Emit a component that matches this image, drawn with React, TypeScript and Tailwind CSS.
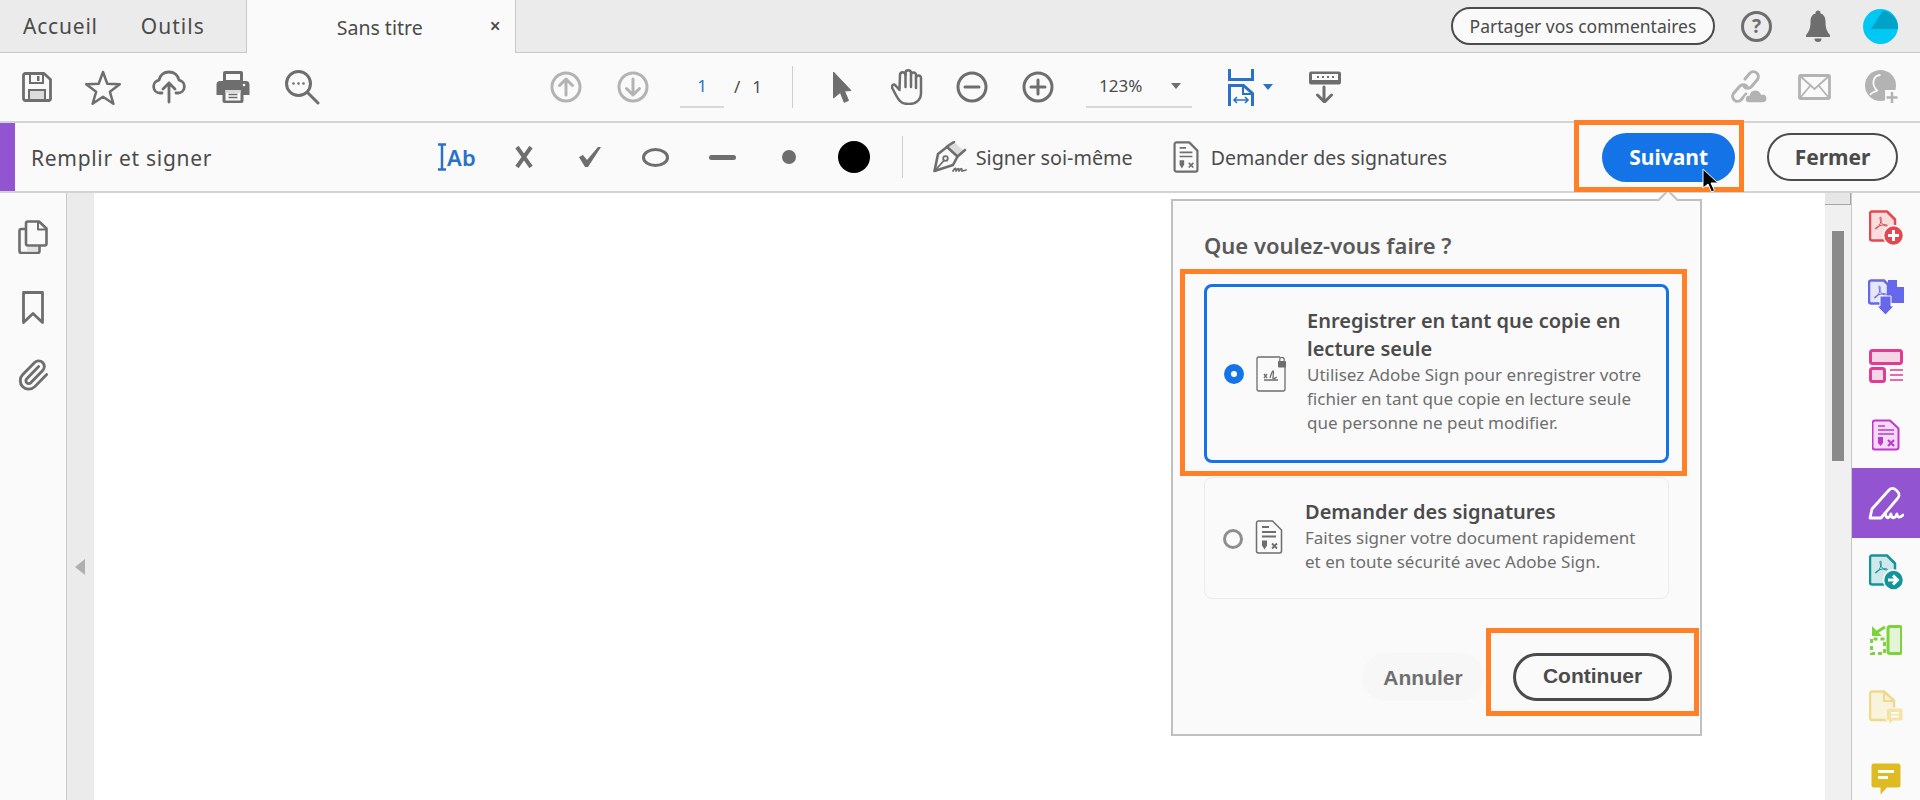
import React from 'react'
import { Paperclip } from 'lucide-react'

const GRAY = '#6e6e6e'
const LIGHT = '#b3b3b3'
const BLUE = '#2a72c9'

const Swoosh = ({ color }: { color: string }) => (
  <path
    d="M7 19c2-1 4-4 5-8 .4-2 .2-4-.5-4-.9 0-.6 3 .8 5.500 1.500 2.500 3.500 3.500 5.200 3.500 1.200 0 1.200-1.200-.5-1.300-3-.2-7 .9-10 3-1 .8-.8 1.500 0 .8z"
    fill="none"
    stroke={color}
    strokeWidth="1"
  />
)

const SaveIcon = () => (
  <svg width="30" height="30" viewBox="0 0 30 30" fill="none" stroke={GRAY} strokeWidth="2.800">
    <path d="M3 1.500h19l6.500 6v19a2 2 0 0 1-2 2h-23a2 2 0 0 1-2-2v-23a2 2 0 0 1 2-2z" strokeLinejoin="round" />
    <path d="M8 2v9h13V2" strokeWidth="2" />
    <rect x="15" y="4" width="2.500" height="5" fill={GRAY} stroke="none" />
    <rect x="7" y="18" width="16" height="10" fill="#dcdcdc" strokeWidth="2" />
  </svg>
)

const StarIcon = () => (
  <svg width="36" height="36" viewBox="0 0 36 36" fill="none" stroke={GRAY} strokeWidth="2.500" strokeLinejoin="round">
    <path d="M18 3l4.300 11.800 12.500.4-9.900 7.600 3.500 12-10.400-7-10.400 7 3.500-12L1.200 15.200l12.500-.4z" />
  </svg>
)

const CloudIcon = () => (
  <svg width="34" height="34" viewBox="0 0 34 34" fill="none" stroke={GRAY} strokeWidth="2.800" strokeLinecap="round" strokeLinejoin="round">
    <path d="M10 23H8a6.500 6.500 0 0 1-1-12.900C8 5 12 2 17 2s9 3 10 8.100A6.500 6.500 0 0 1 26 23h-2" />
    <path d="M17 32V13M11 19l6-6 6 6" />
  </svg>
)

const PrintIcon = () => (
  <svg width="34" height="34" viewBox="0 0 34 34">
    <path d="M7 11V3a2 2 0 0 1 2-2h16a2 2 0 0 1 2 2v8z" fill={GRAY} />
    <rect x="10" y="4" width="14" height="6" fill="#fafafa" />
    <path d="M4 11h26a3.500 3.500 0 0 1 3.500 3.500V25h-6v6a2 2 0 0 1-2 2H8.500a2 2 0 0 1-2-2v-6H.5V14.500A3.500 3.500 0 0 1 4 11z" fill={GRAY} />
    <rect x="9.500" y="20" width="15" height="10.500" fill="#fafafa" />
    <rect x="9.500" y="20" width="15" height="3" fill="#dcdcdc" />
    <path d="M12.500 24.500h9M12.500 27.500h9" stroke={GRAY} strokeWidth="1.500" />
    <circle cx="28" cy="15" r="1.300" fill="#fafafa" />
  </svg>
)

const SearchIcon = () => (
  <svg width="36" height="36" viewBox="0 0 36 36" fill="none" stroke={GRAY} strokeWidth="3" strokeLinecap="round">
    <circle cx="14.500" cy="14.500" r="12" />
    <path d="M24 24l10 10" />
    <circle cx="9.500" cy="14.500" r="1.300" fill={GRAY} stroke="none" />
    <circle cx="14.500" cy="14.500" r="1.300" fill={GRAY} stroke="none" />
    <circle cx="19.500" cy="14.500" r="1.300" fill={GRAY} stroke="none" />
  </svg>
)

const ArrowCircle = ({ down }: { down?: boolean }) => (
  <svg width="32" height="32" viewBox="0 0 32 32" fill="none" stroke={LIGHT} strokeWidth="3" strokeLinecap="round" strokeLinejoin="round">
    <circle cx="16" cy="16" r="14" />
    {down ? <path d="M16 8v16M9.500 17.500L16 24l6.500-6.500" /> : <path d="M16 24V8M9.500 14.500L16 8l6.500 6.500" />}
  </svg>
)

const PointerIcon = () => (
  <svg width="20" height="32" viewBox="0 0 20 32">
    <path d="M1.500 1L19 19.500l-6.500.5 4 9.500-4.300 1.800-3.900-9.800L1.500 27z" fill={GRAY} stroke={GRAY} strokeLinejoin="round" />
  </svg>
)

const HandIcon = () => (
  <svg width="32" height="36" viewBox="0 0 32 36" fill="none" stroke={GRAY} strokeWidth="2.500" strokeLinejoin="round" strokeLinecap="round">
    <path d="M8.500 21L4.500 16.500C2.500 14.500 0 16.500 1.500 19.500 4 24 6 29 9 32c2 2.500 5 3 9 3 7 0 12-4 12-11V9a2.500 2.500 0 0 0-5 0V6a2.500 2.500 0 0 0-5 0V4a2.500 2.500 0 0 0-5.500 0v2a2.500 2.500 0 0 0-5.500 0z" />
    <path d="M14.500 5v13M20 6v12M25 9v10" />
  </svg>
)

const CircleSign = ({ plus }: { plus?: boolean }) => (
  <svg width="32" height="32" viewBox="0 0 32 32" fill="none" stroke={GRAY} strokeWidth="3" strokeLinecap="round">
    <circle cx="16" cy="16" r="14" />
    <path d="M9 16h14" />
    {plus && <path d="M16 9v14" />}
  </svg>
)

const FitIcon = () => (
  <svg width="26" height="37" viewBox="0 0 26 37" fill="none" stroke={BLUE} strokeWidth="3">
    <path d="M1.500 0v10.500h23V0" />
    <path d="M1.500 37V16.500h14l9 8V37" />
    <path d="M15 17v8h9" strokeWidth="2" />
    <path d="M6 31h14M9 28l-3 3 3 3M17 28l3 3-3 3" strokeWidth="1.600" />
  </svg>
)

const ReadIcon = () => (
  <svg width="34" height="32" viewBox="0 0 34 32" fill="none">
    <rect x="1" y="0.500" width="32" height="13" rx="2" fill={GRAY} />
    <rect x="4" y="3" width="26" height="6" fill="#fafafa" />
    <path d="M9 6h2M14 6h2M19 6h2M24 6h2" stroke={GRAY} strokeWidth="2" />
    <path d="M16 16v14M9.500 24l7 7 7-7" stroke={GRAY} strokeWidth="3" strokeLinecap="round" strokeLinejoin="round" />
  </svg>
)

const LinkCloudIcon = () => (
  <svg width="38" height="34" viewBox="0 0 38 34" fill="none" stroke={LIGHT} strokeWidth="3" strokeLinecap="round">
    <path d="M15 9l5-6a5 5 0 0 1 7.500 6.500l-6 7a5 5 0 0 1-7.500 0" />
    <path d="M16 24l-5 6a5 5 0 0 1-7.500-6.500l6-7a5 5 0 0 1 7.500 0" />
    <path d="M19 33a4 4 0 0 1 0-8 6.500 6.500 0 0 1 12.500-1 4.500 4.500 0 0 1 2 9z" fill={LIGHT} stroke="#fafafa" strokeWidth="1.500" />
  </svg>
)

const MailIcon = () => (
  <svg width="33" height="26" viewBox="0 0 33 26" fill="none" stroke={LIGHT} strokeWidth="2.800">
    <rect x="1.500" y="1.500" width="30" height="23" rx="1" />
    <path d="M2 2l14.500 13L31 2M2 24l10-12M31 24L21 12" strokeWidth="1.800" />
  </svg>
)

const PersonPlusIcon = () => (
  <svg width="34" height="34" viewBox="0 0 34 34" fill="none">
    <circle cx="15.500" cy="15.500" r="15.500" fill={LIGHT} />
    <path d="M5 25c2-3 5-3 7-4.500-3-3-4-6-3.500-9.500 1-4 4-6 7-6" stroke="#fafafa" strokeWidth="1.800" />
    <rect x="20" y="20" width="14" height="14" fill="#fafafa" />
    <path d="M27 22v11M21.500 27.500h11" stroke={LIGHT} strokeWidth="2.500" />
  </svg>
)

const BellIcon = () => (
  <svg width="26" height="33" viewBox="0 0 26 33" fill={GRAY}>
    <circle cx="13" cy="3" r="2.500" />
    <path d="M13 3c-5 0-7.500 3.500-7.500 8.500 0 6-1.200 10-4.500 13.500v2h24v-2c-3.300-3.500-4.500-7.500-4.500-13.500C20.500 6.500 18 3 13 3z" />
    <path d="M9.500 28.500h7a3.500 3.500 0 0 1-7 0z" />
  </svg>
)

const AvatarIcon = () => (
  <svg width="35" height="35" viewBox="0 0 35 35">
    <circle cx="17.500" cy="17.500" r="17.500" fill="#00c8f5" />
    <path d="M20 1.500L8 20h27c.3-1 .3-6-3-11-3-4-7-6.500-12-7.500z" fill="#00a3c7" />
  </svg>
)

const IBeam = () => (
  <svg width="9" height="28" viewBox="0 0 9 28" fill="none" stroke={BLUE} strokeWidth="2.500">
    <path d="M0 1.500h8M0 26.500h8M4 1.500v25" />
  </svg>
)

const CrossIcon = () => (
  <svg width="20" height="22" viewBox="0 0 20 22" fill="none" stroke={GRAY} strokeWidth="4">
    <path d="M3 1l14 20M17 1L3 21" />
  </svg>
)

const CheckIcon = () => (
  <svg width="24" height="22" viewBox="0 0 24 22" fill={GRAY}>
    <path d="M1 11l4-2 4 5L20 1h3L10 21H7z" />
  </svg>
)

const PenIcon = () => (
  <svg width="34" height="32" viewBox="0 0 34 32" fill="none" stroke={GRAY} strokeWidth="2.600" strokeLinecap="round" strokeLinejoin="round">
    <path d="M14 6L21 1l10 9-6 5z" fill="#dcdcdc" strokeWidth="0" />
    <path d="M1.500 30L5 13l9-7 10.500 9.500L20 24z" />
    <path d="M2 29.500L10.500 20" strokeWidth="1.800" />
    <circle cx="12.500" cy="17.500" r="2.300" strokeWidth="1.800" />
    <path d="M14 5.500L21 1M24.500 15.500L32 9" />
    <path d="M20 30c2-3 3-4 3 0 2-3 3-3 3 0 2-3 3-3 3 0 1 0 2-.3 4-1" strokeWidth="1.800" />
  </svg>
)

const RequestDoc = ({ width = 28, height = 36, line = 2.400 }: { width?: number; height?: number; line?: number }) => (
  <svg width={width} height={height} viewBox="0 0 28 35" fill="none" stroke={GRAY} strokeWidth={line}>
    <path d="M3.500 1.500h14l9 9v21a2 2 0 0 1-2 2h-21a2 2 0 0 1-2-2v-28a2 2 0 0 1 2-2z" strokeLinejoin="round" />
    <path d="M7 7.500h7M7 12.500h14M7 17h14" strokeWidth="1.800" />
    <path d="M7 21h5v5l-2.500 4L7 26z" fill={GRAY} stroke="none" />
    <path d="M17 24l5 5M22 24l-5 5" strokeWidth="1.800" />
  </svg>
)

const CopyPagesIcon = () => (
  <svg width="30" height="34" viewBox="0 0 30 34" fill="none" stroke={GRAY} strokeWidth="2.600" strokeLinejoin="round">
    <path d="M8 9H3.500a2 2 0 0 0-2 2v20a2 2 0 0 0 2 2h16a2 2 0 0 0 2-2v-5" />
    <path d="M10 1.500h11l7.500 7v15a2 2 0 0 1-2 2H10a2 2 0 0 1-2-2v-20a2 2 0 0 1 2-2z" />
    <path d="M20 2v7.500h8" strokeWidth="2" />
    <rect x="9" y="27" width="11" height="4" fill="#e2e2e2" stroke="none" />
  </svg>
)

const BookmarkIcon = () => (
  <svg width="22" height="34" viewBox="0 0 22 34" fill="none" stroke={GRAY} strokeWidth="2.800" strokeLinejoin="round">
    <path d="M1.500 1.500h19v30l-9.500-9-9.500 9z" />
  </svg>
)

const CreatePdf = () => (
  <svg width="34" height="36" viewBox="0 0 34 36">
    <path d="M3 1.500h15l8 8v19a2 2 0 0 1-2 2H3a2 2 0 0 1-2-2v-25a2 2 0 0 1 2-2z" fill="#f9dcdc" stroke="#e34850" strokeWidth="2.500" strokeLinejoin="round" />
    <Swoosh color="#e34850" />
    <circle cx="24.500" cy="25.500" r="10" fill="#e34850" stroke="#fafafa" strokeWidth="1.500" />
    <path d="M24.500 20v11M19 25.500h11" stroke="#fff" strokeWidth="3" />
  </svg>
)

const CombinePdf = () => (
  <svg width="37" height="37" viewBox="0 0 37 37">
    <path d="M3 1.500h13l4 4v19H3a2 2 0 0 1-2-2v-19a2 2 0 0 1 2-2z" fill="#e6e6fb" stroke="#6767ec" strokeWidth="2.500" />
    <Swoosh color="#6767ec" />
    <path d="M20 1h9l7 7v16H20z" fill="#6767ec" />
    <path d="M29 0l8 8h-8z" fill="#fafafa" />
    <path d="M14 17h-2v10H9l8.500 9 8.500-9h-3V17z" fill="#6767ec" stroke="#fafafa" strokeWidth="1" />
  </svg>
)

const EditPdf = () => (
  <svg width="34" height="34" viewBox="0 0 34 34" fill="none" stroke="#e03d92" strokeWidth="3">
    <rect x="1.500" y="1.500" width="31" height="13" rx="2" fill="#f6d5e6" />
    <rect x="1.500" y="19.500" width="14" height="13" rx="2" fill="#f6d5e6" />
    <path d="M21 21h13M21 26h13M21 31h13" strokeWidth="1.500" />
  </svg>
)

const SignRequest = () => (
  <svg width="28" height="32" viewBox="0 0 28 32">
    <path d="M3 1.500h15l8.500 8V28a2.500 2.500 0 0 1-2.500 2.500H3A2.500 2.500 0 0 1 .5 28V4A2.500 2.500 0 0 1 3 1.500z" fill="#f3daf6" stroke="#c038cc" strokeWidth="2" strokeLinejoin="round" />
    <path d="M6 7h7M6 11h16M6 15h16" stroke="#c038cc" strokeWidth="1.600" />
    <path d="M6 18h5v6l-2.500 3L6 24z" fill="#c038cc" />
    <path d="M16 21l6 6M22 21l-6 6" stroke="#c038cc" strokeWidth="2.200" />
  </svg>
)

const FillSignWhite = () => (
  <svg width="36" height="34" viewBox="0 0 36 34" fill="none" stroke="#fff" strokeWidth="2.800" strokeLinecap="round" strokeLinejoin="round">
    <path d="M2 32l2-9L21 4c2-2 5-2 7 0l1.500 1.500c2 2 2 5 0 7L13 32z" />
    <path d="M17 27c1 5 3 6 5 3l1-2c0 4 3 5 5 2l1-2c0 4 3 4 6 1" />
  </svg>
)

const ExportPdf = () => (
  <svg width="34" height="36" viewBox="0 0 34 36">
    <path d="M3 1.500h15l8 8v19a2 2 0 0 1-2 2H3a2 2 0 0 1-2-2v-25a2 2 0 0 1 2-2z" fill="#cfe8ea" stroke="#12959a" strokeWidth="2.500" strokeLinejoin="round" />
    <Swoosh color="#12959a" />
    <circle cx="24.500" cy="26" r="10" fill="#12959a" stroke="#fafafa" strokeWidth="1.500" />
    <path d="M19 26h8M24 21.500l4.500 4.500-4.500 4.500" stroke="#fff" strokeWidth="2.800" fill="none" />
  </svg>
)

const OrganizeIcon = () => (
  <svg width="32" height="30" viewBox="0 0 32 30" fill="none" stroke="#7fd13d">
    <rect x="18" y="1.500" width="13.500" height="27" rx="2" fill="#e4f4d6" strokeWidth="3" />
    <path d="M1.500 14v14.500h13V14z" strokeWidth="3" strokeDasharray="4 3" />
    <path d="M2 1v10h10z" fill="#7fd13d" stroke="none" />
    <path d="M7 7l8-5" strokeWidth="3" />
  </svg>
)

const CommentDocIcon = () => (
  <svg width="34" height="36" viewBox="0 0 34 36">
    <path d="M3 1.500h12l10 9V28a2 2 0 0 1-2 2H3a2 2 0 0 1-2-2V3.500a2 2 0 0 1 2-2z" fill="#f8f3dc" stroke="#f0d98a" strokeWidth="2.500" strokeLinejoin="round" />
    <path d="M15 2v9h10" fill="none" stroke="#f0d98a" strokeWidth="2" />
    <path d="M19 18h13a2 2 0 0 1 2 2v9a2 2 0 0 1-2 2H24l-4 4v-4h-1a2 2 0 0 1-2-2v-9a2 2 0 0 1 2-2z" fill="#f4e4a6" stroke="#fafafa" />
    <path d="M22 23h8M22 26.500h8" stroke="#fff" strokeWidth="1.800" />
  </svg>
)

const NoteIcon = () => (
  <svg width="30" height="32" viewBox="0 0 30 32">
    <path d="M3 .5h24A2.500 2.500 0 0 1 29.500 3v19a2.500 2.500 0 0 1-2.500 2.500H16L9.500 31.500v-7H3A2.500 2.500 0 0 1 .5 22V3A2.500 2.500 0 0 1 3 .5z" fill="#dfbb22" />
    <path d="M7 8.500h16M7 14.500h10" stroke="#fff" strokeWidth="3" />
  </svg>
)

const LockedDoc = () => (
  <svg width="32" height="36" viewBox="0 0 32 36" fill="none" stroke={GRAY} strokeWidth="1.300">
    <path d="M24 1H3a2 2 0 0 0-2 2v30a2 2 0 0 0 2 2h24a2 2 0 0 0 2-2V10" />
    <path d="M8 18l3 4M11 18l-3 4M8 24h14" />
    <path d="M14 22c1-3 2-7 3-7s0 5 0 7 2 0 4-1" />
    <rect x="22" y="5" width="8" height="6.500" rx="1" fill={GRAY} stroke="none" />
    <path d="M23.800 5V3.500a2.200 2.200 0 0 1 4.400 0V5" strokeWidth="1.200" />
  </svg>
)

const OrangeBox = ({ className }: { className: string }) => (
  <div className={`absolute border-[5px] border-[#ff8027] ${className}`} />
)

export default function App() {
  return (
    <div className="relative flex h-[800px] w-[1920px] flex-col overflow-hidden bg-white font-['Noto_Sans','Open_Sans',sans-serif] text-[#4b4b4b]">
      {/* tab bar */}
      <div className="flex h-[53px] shrink-0 items-stretch border-b border-[#c8c8c8] bg-[#ebebeb]">
        <div className="ml-[23px] flex items-center pt-[2px] text-[21px] tracking-[0.8px]">Accueil</div>
        <div className="ml-[43px] flex items-center pt-[2px] text-[21px] tracking-[1px]">Outils</div>
        <div className="relative ml-[41px] -mb-px flex w-[270px] items-center justify-center border-x border-[#c8c8c8] bg-[#fafafa] pt-[2px] text-[19.500px]">
          <span className="mr-[2px]">Sans titre</span>
          <span className="absolute right-[14px] top-[12px] text-[19px] font-semibold">×</span>
        </div>
        <div className="ml-auto flex items-center">
          <div className="flex h-[38px] w-[264px] items-center justify-center rounded-full border-2 border-[#4b4b4b] bg-[#fafafa] text-[17.500px]">
            Partager vos commentaires
          </div>
          <div className="ml-[26px] flex h-[31px] w-[31px] items-center justify-center rounded-full border-[3px] border-[#6e6e6e] text-[19px] font-bold leading-none text-[#6e6e6e]">?</div>
          <div className="ml-[33px] flex w-[26px]"><BellIcon /></div>
          <div className="ml-[32px] mr-[22px] flex w-[35px]"><AvatarIcon /></div>
        </div>
      </div>

      {/* main toolbar */}
      <div className="flex h-[70px] shrink-0 items-center border-b-2 border-[#d4d4d4] bg-[#fafafa]">
        <div className="ml-[17px] flex w-10 justify-center"><SaveIcon /></div>
        <div className="ml-[26px] flex w-10 justify-center"><StarIcon /></div>
        <div className="ml-[26px] flex w-10 justify-center"><CloudIcon /></div>
        <div className="ml-[24px] flex w-10 justify-center"><PrintIcon /></div>
        <div className="ml-[29px] flex w-10 justify-center"><SearchIcon /></div>
        <div className="ml-[224px] flex w-10 justify-center"><ArrowCircle /></div>
        <div className="ml-[27px] flex w-10 justify-center"><ArrowCircle down /></div>
        <div className="ml-[27px] flex h-[42px] w-[44px] items-center justify-center border-b-2 border-[#d8d8d8] text-[17px] text-[#2a72c9]">1</div>
        <div className="ml-[10px] text-[17px]">/</div>
        <div className="ml-[12px] text-[17px]">1</div>
        <div className="ml-[30px] h-[42px] w-px bg-[#cfcfcf]" />
        <div className="ml-[29px] flex w-10 justify-center"><PointerIcon /></div>
        <div className="ml-[25px] flex w-10 justify-center"><HandIcon /></div>
        <div className="ml-[25px] flex w-10 justify-center"><CircleSign /></div>
        <div className="ml-[26px] flex w-10 justify-center"><CircleSign plus /></div>
        <div className="ml-[28px] flex h-[42px] w-[106px] items-center border-b-2 border-[#d8d8d8] text-[17px]">
          <span className="ml-[13px]">123%</span>
          <span className="ml-auto mr-[11px] h-0 w-0 border-x-[5px] border-t-[6px] border-x-transparent border-t-[#6e6e6e]" />
        </div>
        <div className="ml-[36px] flex w-[26px]"><FitIcon /></div>
        <span className="ml-[9px] h-0 w-0 border-x-[5px] border-t-[6px] border-x-transparent border-t-[#2a72c9]" />
        <div className="ml-[35px] flex w-[34px]"><ReadIcon /></div>
        <div className="ml-[388px] flex w-[38px]"><LinkCloudIcon /></div>
        <div className="ml-[30px] flex w-[33px]"><MailIcon /></div>
        <div className="ml-[34px] flex w-[34px]"><PersonPlusIcon /></div>
      </div>

      {/* fill and sign bar */}
      <div className="flex h-[70px] shrink-0 items-center border-b-2 border-[#d4d4d4] bg-[#fafafa]">
        <div className="h-full w-[15px] bg-[#9254d1]" />
        <div className="ml-[16px] pt-[3px] text-[21px] tracking-[0.7px]">Remplir et signer</div>
        <div className="ml-[226px] flex items-center text-[#2a72c9]">
          <IBeam />
          <span className="text-[22px] font-semibold leading-none">Ab</span>
        </div>
        <div className="ml-[38px] flex"><CrossIcon /></div>
        <div className="ml-[44px] flex"><CheckIcon /></div>
        <div className="ml-[40px] h-[19px] w-[27px] rounded-[50%] border-[3px] border-[#6e6e6e]" />
        <div className="ml-[40px] h-[5px] w-[27px] rounded-full bg-[#6e6e6e]" />
        <div className="ml-[46px] h-[14px] w-[14px] rounded-full bg-[#6e6e6e]" />
        <div className="ml-[42px] h-8 w-8 rounded-full bg-black" />
        <div className="ml-[32px] h-[42px] w-px bg-[#cfcfcf]" />
        <div className="ml-[30px] flex"><PenIcon /></div>
        <div className="ml-[9px] w-[156px] whitespace-nowrap pt-[1px] text-[19.800px]">Signer soi-même</div>
        <div className="ml-[41px] flex"><RequestDoc width={26} height={32} /></div>
        <div className="ml-[12px] whitespace-nowrap pt-[1px] text-[19.500px]">Demander des signatures</div>
        <button className="ml-[155px] h-[49px] w-[133px] rounded-full bg-[#1473e6] pt-[2px] text-[21px] font-bold text-white">Suivant</button>
        <button className="ml-[32px] h-[48px] w-[131px] rounded-full border-2 border-[#4b4b4b] pt-[2px] text-[21px] font-bold">Fermer</button>
      </div>

      {/* work area */}
      <div className="flex min-h-0 flex-1 overflow-hidden">
        <div className="flex w-[67px] flex-col items-center border-r border-[#c8c8c8] bg-[#fafafa] pt-[27px]">
          <CopyPagesIcon />
          <div className="mt-[37px] flex"><BookmarkIcon /></div>
          <div className="mt-[33px] flex text-[#6e6e6e]"><Paperclip size={34} strokeWidth={2} /></div>
        </div>
        <div className="w-[27px] bg-[#ebebeb] pl-[8px] pt-[366px]">
          <span className="block h-0 w-0 border-y-[8px] border-r-[10px] border-y-transparent border-r-[#b0b0b0]" />
        </div>
        <div className="flex-1 bg-white" />
        <div className="flex w-[26px] flex-col bg-[#f0f0f0]">
          <div className="h-[12px] border-r border-b border-[#a8a8a8] bg-[#e6e6e6]" />
          <div className="ml-[7px] mt-[26px] h-[230px] w-[12px] bg-[#8a8a8a]" />
        </div>
        <div className="flex w-[69px] flex-col items-center border-l border-[#c8c8c8] bg-[#fafafa]">
          <div className="flex h-[70px] shrink-0 items-center"><CreatePdf /></div>
          <div className="flex h-[68px] shrink-0 items-center"><CombinePdf /></div>
          <div className="flex h-[70px] shrink-0 items-center"><EditPdf /></div>
          <div className="flex h-[67px] shrink-0 items-center"><SignRequest /></div>
          <div className="flex h-[70px] w-full shrink-0 items-center justify-center bg-[#9254d1]"><FillSignWhite /></div>
          <div className="flex h-[68px] shrink-0 items-center"><ExportPdf /></div>
          <div className="flex h-[68px] shrink-0 items-center"><OrganizeIcon /></div>
          <div className="flex h-[68px] shrink-0 items-center"><CommentDocIcon /></div>
          <div className="flex h-[74px] shrink-0 items-center"><NoteIcon /></div>
        </div>
      </div>

      {/* popover under Suivant */}
      <div className="absolute left-[1171px] top-[199px] flex h-[537px] w-[531px] flex-col border-2 border-[#c0c0c0] bg-[#fafafa] pl-[31px]">
        <div className="absolute left-[488px] top-[-9px] h-[14px] w-[14px] rotate-45 border-l-2 border-t-2 border-[#c0c0c0] bg-[#fafafa]" />
        <div className="mt-[29px] text-[22px] font-semibold leading-[30px] text-[#595959]">Que voulez-vous faire ?</div>
        <div className="mt-[24px] flex h-[179px] w-[465px] items-center rounded-lg border-[3px] border-[#1473e6] pl-[17px]">
          <span className="flex h-[20px] w-[20px] items-center justify-center rounded-full bg-[#1473e6]">
            <span className="h-[6px] w-[6px] rounded-full bg-white" />
          </span>
          <div className="ml-[12px] flex"><LockedDoc /></div>
          <div className="mb-[6px] ml-[19px] w-[340px]">
            <div className="text-[20px] font-semibold leading-[28px]">Enregistrer en tant que copie en lecture seule</div>
            <div className="text-[17px] leading-[24px] text-[#6e6e6e]">Utilisez Adobe Sign pour enregistrer votre fichier en tant que copie en lecture seule que personne ne peut modifier.</div>
          </div>
        </div>
        <div className="mt-[14px] flex h-[122px] w-[465px] items-start rounded-lg border border-[#ececec] pl-[18px] pt-[20px]">
          <span className="mt-[31px] h-[20px] w-[20px] rounded-full border-[3px] border-[#8e8e8e]" />
          <div className="ml-[12px] mt-[21px] flex"><RequestDoc line={1.500} /></div>
          <div className="ml-[22px] w-[340px]">
            <div className="text-[20px] font-semibold leading-[28px]">Demander des signatures</div>
            <div className="text-[17px] leading-[24px] text-[#6e6e6e]">Faites signer votre document rapidement et en toute sécurité avec Adobe Sign.</div>
          </div>
        </div>
        <div className="mt-[54px] flex items-center justify-end pr-[28px]">
          <button className="h-[48px] w-[122px] rounded-full bg-[#f7f7f7] pt-[2px] font-['Liberation_Sans',Arial,sans-serif] text-[21px] font-bold text-[#6e6e6e]">Annuler</button>
          <button className="ml-[29px] h-[48px] w-[159px] rounded-full border-[3px] border-[#4b4b4b] pb-[2px] font-['Liberation_Sans',Arial,sans-serif] text-[21px] font-bold">Continuer</button>
        </div>
      </div>

      {/* orange annotations drawn on top of the screenshot */}
      <OrangeBox className="left-[1574px] top-[120px] h-[72px] w-[170px]" />
      <OrangeBox className="left-[1180px] top-[269px] h-[207px] w-[507px]" />
      <OrangeBox className="left-[1486px] top-[628px] h-[88px] w-[213px]" />

      {/* mouse cursor */}
      <svg className="absolute left-[1702px] top-[168px]" width="17" height="27" viewBox="0 0 17 27">
        <path d="M1 1v19l5-4 3.500 8 3-1.500L9 15h7z" fill="#000" stroke="#fff" strokeWidth="1" />
      </svg>
    </div>
  )
}
